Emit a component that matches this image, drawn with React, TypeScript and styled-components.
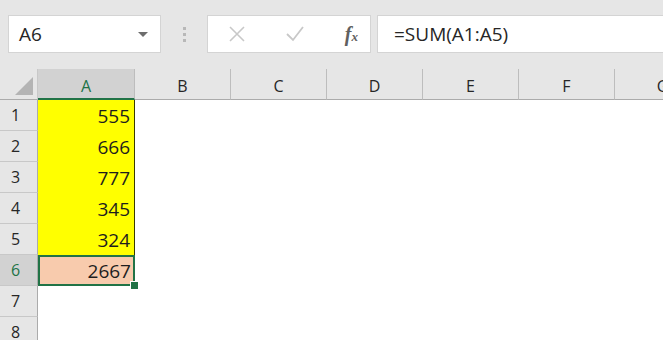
import styled, { createGlobalStyle } from 'styled-components';

const GlobalStyle = createGlobalStyle`
    html, body {
        margin: 0;
        padding: 0;
        background: #ffffff;
        overflow: hidden;
    }
    body {
        font-family: 'Open Sans', 'Noto Sans', sans-serif;
    }
`;

const columns = ['A', 'B', 'C', 'D', 'E', 'F', 'G'];
const values = ['555', '666', '777', '345', '324', '2667'];
const rowCount = 8;

type Fill = 'none' | 'yellow' | 'peach';

const fillFor = (row: number): Fill => {
    if (row <= 5) return 'yellow';
    if (row === 6) return 'peach';
    return 'none';
};

function App() {
    return (
        <Sheet>
            <GlobalStyle />
            <FormulaBar>
                <NameBox>
                    <span>A6</span>
                    <Caret />
                </NameBox>
                <Grip>
                    <i />
                    <i />
                    <i />
                </Grip>
                <FuncBox>
                    <svg width="18" height="18" viewBox="0 0 18 18">
                        <path d="M2 2 L16 16 M16 2 L2 16" stroke="#c8c8c8" strokeWidth="1.6" fill="none" />
                    </svg>
                    <svg width="20" height="18" viewBox="0 0 20 18">
                        <path d="M2 9 L8 15 L18 2" stroke="#c8c8c8" strokeWidth="1.8" fill="none" />
                    </svg>
                    <Fx>
                        f<sub>x</sub>
                    </Fx>
                </FuncBox>
                <FormulaInput>=SUM(A1:A5)</FormulaInput>
            </FormulaBar>
            <Grid>
                <Corner>
                    <svg width="20" height="20" viewBox="0 0 20 20">
                        <path d="M19 1 L19 19 L1 19 Z" fill="#b4b4b4" />
                    </svg>
                </Corner>
                {columns.map((c) => (
                    <ColHeader key={c} $active={c === 'A'}>
                        {c}
                    </ColHeader>
                ))}
                {Array.from({ length: rowCount }, (_, i) => i + 1).map((row) => [
                    <RowHeader key={`r${row}`} $active={row === 6}>
                        {row}
                    </RowHeader>,
                    ...columns.map((c) =>
                        c === 'A' ? (
                            <Cell key={`${c}${row}`} $fill={fillFor(row)} $selected={row === 6}>
                                {values[row - 1] ?? ''}
                                {row === 6 && <Handle />}
                            </Cell>
                        ) : (
                            <Cell key={`${c}${row}`} $fill="none" />
                        ),
                    ),
                ])}
            </Grid>
        </Sheet>
    );
}

const Sheet = styled.div`
    width: 663px;
    height: 340px;
    overflow: hidden;
    background: #ffffff;
`;

const FormulaBar = styled.div`
    display: flex;
    align-items: flex-start;
    height: 69px;
    box-sizing: border-box;
    padding: 15px 0 0 8px;
    background: #e6e6e6;
`;

const Box = styled.div`
    height: 38px;
    box-sizing: border-box;
    background: #ffffff;
    border: 1px solid #d4d4d4;
    display: flex;
    align-items: center;
`;

const NameBox = styled(Box)`
    width: 153px;
    padding: 0 10px 0 10px;
    justify-content: space-between;
    font-size: 19px;
    color: #262626;
`;

const Caret = styled.span`
    width: 0;
    height: 0;
    border-left: 5px solid transparent;
    border-right: 5px solid transparent;
    border-top: 5px solid #6d6d6d;
    margin-right: 2px;
`;

const Grip = styled.div`
    width: 46px;
    height: 38px;
    display: flex;
    flex-direction: column;
    align-items: center;
    justify-content: center;
    gap: 3px;
    & > i {
        width: 3px;
        height: 3px;
        background: #b8b8b8;
    }
`;

const FuncBox = styled(Box)`
    width: 164px;
    padding: 0 12px 0 20px;
    justify-content: space-between;
`;

const Fx = styled.span`
    font-family: 'Liberation Serif', 'DejaVu Serif', serif;
    font-style: italic;
    font-weight: bold;
    font-size: 20px;
    color: #606060;
    sub {
        font-size: 13px;
        vertical-align: baseline;
    }
`;

const FormulaInput = styled(Box)`
    flex: 1;
    margin-left: 6px;
    border-right: none;
    padding-left: 16px;
    font-size: 19px;
    color: #262626;
`;

const Grid = styled.div`
    display: grid;
    grid-template-columns: 38px 97px repeat(6, 96px);
    grid-template-rows: 31px repeat(8, 31px);
`;

const Corner = styled.div`
    background: #e6e6e6;
    border-right: 1px solid #c8c8c8;
    border-bottom: 1px solid #ababab;
    display: flex;
    align-items: flex-end;
    justify-content: flex-end;
    padding: 0 3px 3px 0;
`;

const ColHeader = styled.div<{ $active: boolean }>`
    background: ${(p) => (p.$active ? '#d2d2d2' : '#e6e6e6')};
    color: ${(p) => (p.$active ? '#217346' : '#262626')};
    border-right: 1px solid #bdbdbd;
    border-bottom: ${(p) => (p.$active ? '2px solid #217346' : '1px solid #ababab')};
    display: flex;
    align-items: center;
    justify-content: center;
    font-size: 16px;
    padding-top: 4px;
    box-sizing: border-box;
`;

const RowHeader = styled.div<{ $active: boolean }>`
    background: ${(p) => (p.$active ? '#d2d2d2' : '#e6e6e6')};
    color: ${(p) => (p.$active ? '#217346' : '#262626')};
    border-right: 1px solid #ababab;
    border-bottom: 1px solid #c8c8c8;
    display: flex;
    align-items: center;
    padding-left: 11px;
    font-size: 16px;
    box-sizing: border-box;
`;

const fills: Record<Fill, string> = {
    none: '#ffffff',
    yellow: '#ffff00',
    peach: '#f8cbad',
};

const Cell = styled.div<{ $fill: Fill; $selected?: boolean }>`
    position: relative;
    background: ${(p) => fills[p.$fill]};
    border-right: ${(p) => (p.$fill === 'yellow' ? '1px solid #3a3a00' : 'none')};
    outline: ${(p) => (p.$selected ? '2px solid #217346' : 'none')};
    outline-offset: -2px;
    display: flex;
    align-items: center;
    justify-content: flex-end;
    padding-right: 4px;
    font-size: 19px;
    color: #1e1e1e;
    box-sizing: border-box;
    z-index: ${(p) => (p.$selected ? 1 : 0)};
`;

const Handle = styled.span`
    position: absolute;
    right: -4px;
    bottom: -4px;
    width: 7px;
    height: 7px;
    background: #217346;
    border: 1px solid #ffffff;
`;

export default App;
